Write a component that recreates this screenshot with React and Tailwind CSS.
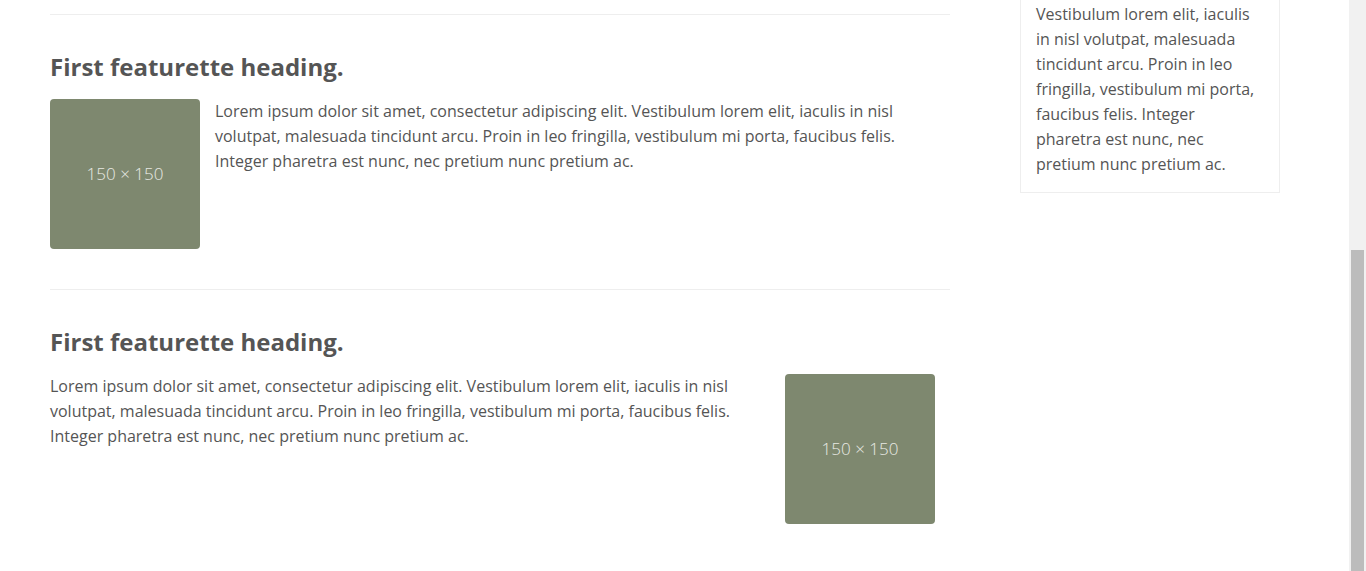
const lorem =
  "Lorem ipsum dolor sit amet, consectetur adipiscing elit. Vestibulum lorem elit, iaculis in nisl volutpat, malesuada tincidunt arcu. Proin in leo fringilla, vestibulum mi porta, faucibus felis. Integer pharetra est nunc, nec pretium nunc pretium ac.";

function Placeholder() {
  return (
    <div className="flex h-[150px] w-[150px] shrink-0 items-center justify-center rounded-[4px] bg-[#7e886f]">
      <span className="text-[17px] font-light text-[#e8eae4]">150 × 150</span>
    </div>
  );
}

function Featurette({ imageRight }) {
  return (
    <div>
      <hr className="border-0 border-t border-[#eeeeee]" />
      <h2 className="mt-[39px] mb-[19px] text-[24px] font-bold leading-[26px] text-[#555555]">
        First featurette heading.
      </h2>
      {imageRight ? (
        <div className="flex items-start justify-between pr-[15px]">
          <p className="w-[700px] text-[16px] leading-[25px] text-[#555555]">{lorem}</p>
          <Placeholder />
        </div>
      ) : (
        <div className="flex items-start gap-[15px]">
          <Placeholder />
          <p className="text-[16px] leading-[25px] text-[#555555]">{lorem}</p>
        </div>
      )}
      <div className="h-[40px]" />
    </div>
  );
}

export default function App() {
  return (
    <div
      className="flex h-[571px] w-full overflow-hidden bg-white"
      style={{ fontFamily: '"Open Sans", "Noto Sans", sans-serif' }}
    >
      <div className="flex flex-1 pl-[50px]">
        <div className="w-[900px] pt-[14px]">
          <Featurette />
          <Featurette imageRight />
        </div>

        <div className="ml-[70px] w-[260px]">
          <div className="border border-t-0 border-[#eeeeee] px-[15px] pt-[2px] pb-[15px]">
            <p className="text-[16px] leading-[25px] text-[#555555]">
              Vestibulum lorem elit, iaculis in nisl volutpat, malesuada tincidunt arcu. Proin in leo fringilla,
              vestibulum mi porta, faucibus felis. Integer pharetra est nunc, nec pretium nunc pretium ac.
            </p>
          </div>
        </div>
      </div>

      <div className="flex w-[17px] shrink-0 flex-col bg-[#f1f1f1] pt-[250px]">
        <div className="mx-[2px] flex-1 bg-[#bcbcbc]" />
      </div>
    </div>
  );
}
